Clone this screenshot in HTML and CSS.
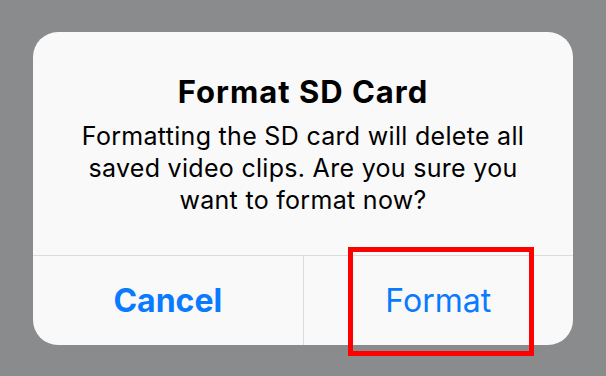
FILE: index.html
```html
<!doctype html>
<html lang="en">
<head>
  <meta charset="utf-8">
  <title>Format SD Card</title>
  <link rel="stylesheet" href="styles.css">
</head>
<body>
<div class="alert">
  <div class="alert__content">
    <h1 class="alert__title">Format SD Card</h1>
    <p class="alert__message">Formatting the SD card will delete all saved video clips. Are you sure you want to format now?</p>
  </div>
  <div class="alert__actions">
    <button type="button" class="alert__button alert__button--bold">Cancel</button>
    <button type="button" class="alert__button alert__button--marked">Format</button>
  </div>
</div>
</body>
</html>
```

FILE: styles.css
```css
body {
  margin: 0;
  padding: 32px 0 0 33px;
  height: 376px;
  box-sizing: border-box;
  overflow: hidden;
  background-color: #8a8b8d;
  font-family: "Inter", "Noto Sans", sans-serif;
}

.alert {
  width: 540px;
  height: 313px;
  background-color: #f9f9f9;
  border-radius: 25px;
  display: flex;
  flex-direction: column;
}

.alert__content {
  padding: 41px 40px 0;
  height: 224px;
  box-sizing: border-box;
  border-bottom: 1px solid #dbdbdb;
  text-align: center;
  color: #000;
}

.alert__title {
  margin: 0;
  font-size: 31px;
  line-height: 38px;
  font-weight: 700;
  letter-spacing: 1px;
}

.alert__message {
  margin: 9px 0 0;
  font-size: 25px;
  line-height: 32px;
  font-weight: 400;
  letter-spacing: 0.3px;
}

.alert__actions {
  flex: 1;
  display: flex;
}

.alert__button {
  flex: 1;
  position: relative;
  border: none;
  background: none;
  padding: 0;
  font-family: inherit;
  font-size: 32px;
  font-weight: 400;
  color: #0a7aff;
}

.alert__button + .alert__button {
  border-left: 1px solid #dbdbdb;
}

.alert__button--bold {
  font-weight: 700;
}

.alert__button--marked:after {
  content: "";
  position: absolute;
  left: 44px;
  top: -9px;
  width: 176px;
  height: 99px;
  border: 5px solid #ff0000;
}
```
